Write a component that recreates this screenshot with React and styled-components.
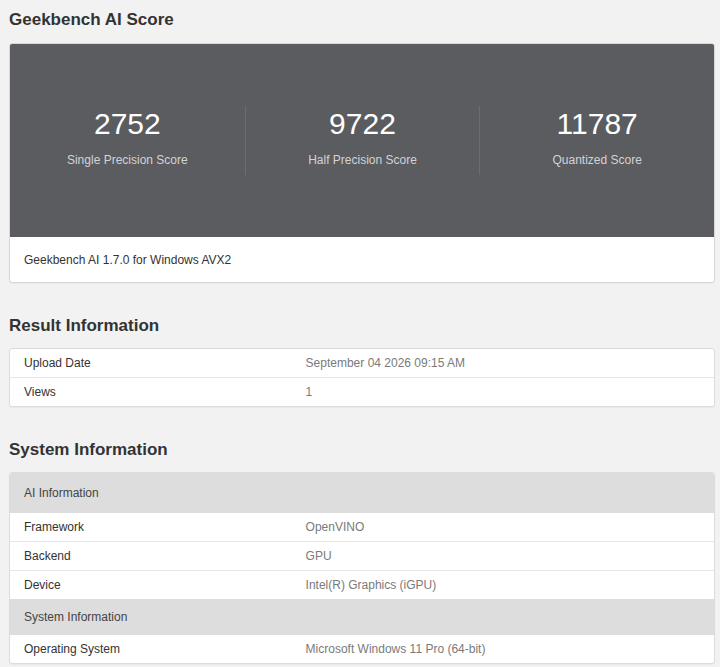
import styled, { createGlobalStyle } from "styled-components";

const GlobalStyle = createGlobalStyle`
  html, body {
    margin: 0;
    padding: 0;
    background-color: #f2f2f2;
  }
  body {
    font-family: "Liberation Sans", Arial, sans-serif;
    color: #333;
  }
`;

const Page = styled.div`
  padding: 10px 5px 20px 9px;
`;

const SectionTitle = styled.h2`
  margin: ${(p) => p.$top || 0}px 0 0;
  font-size: 17px;
  font-weight: 700;
  line-height: 20px;
  color: #333;
`;

const ScoreCard = styled.div`
  margin-top: 13px;
  border: 1px solid #d8d8d8;
  border-radius: 3px;
  background-color: #fff;
  overflow: hidden;
  box-shadow: 0 1px 1px rgba(0, 0, 0, 0.04);
`;

const ScoreBody = styled.div`
  height: 193px;
  background-color: #5b5c60;
  display: grid;
  grid-template-columns: repeat(3, 1fr);
  align-items: center;
`;

const ScoreCol = styled.div`
  display: flex;
  flex-direction: column;
  align-items: center;
  padding-bottom: 7px;
  border-left: ${(p) => (p.$first ? "none" : "1px solid #6c6d71")};
`;

const ScoreValue = styled.div`
  font-size: 30px;
  line-height: 36px;
  color: #fff;
`;

const ScoreLabel = styled.div`
  margin-top: 10px;
  font-size: 12px;
  line-height: 16px;
  color: #d2d3d5;
`;

const ScoreFooter = styled.div`
  padding: 16px 14px 15px;
  font-size: 12px;
  line-height: 14px;
  color: #333;
`;

const Table = styled.div`
  margin-top: 12px;
  border: 1px solid #dcdcdc;
  border-radius: 3px;
  background-color: #fff;
  overflow: hidden;
  box-shadow: 0 1px 1px rgba(0, 0, 0, 0.04);
`;

const Row = styled.div`
  display: grid;
  grid-template-columns: 40% 60%;
  font-size: 12px;
  line-height: 14px;
  & + & {
    border-top: 1px solid #e6e6e6;
  }
`;

const Label = styled.div`
  padding: 7px 14px;
  color: #333;
`;

const Value = styled.div`
  padding: 7px 14px;
  color: #7a7a7a;
`;

const GroupHeader = styled.div`
  padding: ${(p) => (p.$tall ? "13px 14px" : "11px 14px")};
  font-size: 12px;
  line-height: 14px;
  color: #444;
  background-color: #dddddd;
`;

const scores = [
  { value: "2752", label: "Single Precision Score" },
  { value: "9722", label: "Half Precision Score" },
  { value: "11787", label: "Quantized Score" },
];

const resultInfo = [
  ["Upload Date", "September 04 2026 09:15 AM"],
  ["Views", "1"],
];

const systemInfo = [
  {
    title: "AI Information",
    rows: [
      ["Framework", "OpenVINO"],
      ["Backend", "GPU"],
      ["Device", "Intel(R) Graphics (iGPU)"],
    ],
  },
  {
    title: "System Information",
    rows: [["Operating System", "Microsoft Windows 11 Pro (64-bit)"]],
  },
];

function InfoRows({ rows }) {
  return rows.map(([label, value]) => (
    <Row key={label}>
      <Label>{label}</Label>
      <Value>{value}</Value>
    </Row>
  ));
}

export default function App() {
  return (
    <>
      <GlobalStyle />
      <Page>
        <SectionTitle>Geekbench AI Score</SectionTitle>
        <ScoreCard>
          <ScoreBody>
            {scores.map((s, i) => (
              <ScoreCol key={s.label} $first={i === 0}>
                <ScoreValue>{s.value}</ScoreValue>
                <ScoreLabel>{s.label}</ScoreLabel>
              </ScoreCol>
            ))}
          </ScoreBody>
          <ScoreFooter>Geekbench AI 1.7.0 for Windows AVX2</ScoreFooter>
        </ScoreCard>

        <SectionTitle $top={33}>Result Information</SectionTitle>
        <Table>
          <InfoRows rows={resultInfo} />
        </Table>

        <SectionTitle $top={33}>System Information</SectionTitle>
        <Table>
          {systemInfo.map((group, i) => (
            <div key={group.title}>
              <GroupHeader $tall={i === 0}>{group.title}</GroupHeader>
              <InfoRows rows={group.rows} />
            </div>
          ))}
        </Table>
      </Page>
    </>
  );
}
